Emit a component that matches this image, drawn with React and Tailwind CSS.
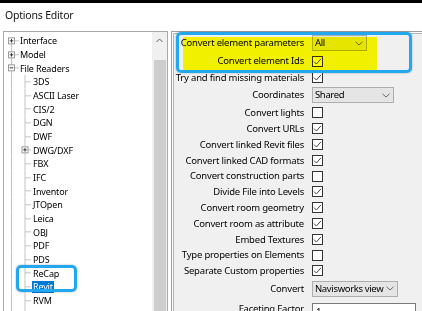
import React from "react";

const TREE = [
  { label: "Interface", level: 0, toggle: "plus", first: true },
  { label: "Model", level: 0, toggle: "plus" },
  { label: "File Readers", level: 0, toggle: "minus" },
  { label: "3DS", level: 1 },
  { label: "ASCII Laser", level: 1 },
  { label: "CIS/2", level: 1 },
  { label: "DGN", level: 1 },
  { label: "DWF", level: 1 },
  { label: "DWG/DXF", level: 1, toggle: "plus" },
  { label: "FBX", level: 1 },
  { label: "IFC", level: 1 },
  { label: "Inventor", level: 1 },
  { label: "JTOpen", level: 1 },
  { label: "Leica", level: 1 },
  { label: "OBJ", level: 1 },
  { label: "PDF", level: 1 },
  { label: "PDS", level: 1 },
  { label: "ReCap", level: 1 },
  { label: "Revit", level: 1, selected: true },
  { label: "RVM", level: 1 },
  { label: "STL", level: 1 },
];

// rows of the options grid: type, label, value, row height
const OPTIONS = [
  { type: "select", label: "Convert element parameters", value: "All", w: "w-[55px]", h: "h-[18px]" },
  { type: "check", label: "Convert element Ids", checked: true, h: "h-[18px]" },
  { type: "check", label: "Try and find missing materials", checked: true, h: "h-[15px]" },
  { type: "select", label: "Coordinates", value: "Shared", w: "w-[82px]", h: "h-[20px]" },
  { type: "check", label: "Convert lights", checked: false, h: "h-[15.8px]" },
  { type: "check", label: "Convert URLs", checked: true, h: "h-[15.8px]" },
  { type: "check", label: "Convert linked Revit files", checked: true, h: "h-[15.8px]" },
  { type: "check", label: "Convert linked CAD formats", checked: true, h: "h-[15.8px]" },
  { type: "check", label: "Convert construction parts", checked: false, h: "h-[15.8px]" },
  { type: "check", label: "Divide File into Levels", checked: true, h: "h-[15.8px]" },
  { type: "check", label: "Convert room geometry", checked: true, h: "h-[15.8px]" },
  { type: "check", label: "Convert room as attribute", checked: true, h: "h-[15.8px]" },
  { type: "check", label: "Embed Textures", checked: true, h: "h-[15.8px]" },
  { type: "check", label: "Type properties on Elements", checked: false, h: "h-[15.8px]" },
  { type: "check", label: "Separate Custom properties", checked: true, h: "h-[15.8px]" },
  { type: "select", label: "Convert", value: "Navisworks view", w: "w-[86px]", h: "h-[20px]" },
  { type: "input", label: "Faceting Factor", value: "1", h: "h-[20px]" },
];

const LINE = "#c3c3c3";

function ToggleBox({ cx, kind }) {
  return (
    <g>
      <rect x={cx - 3} y={3.84} width={6} height={6} fill="#fff" stroke="#9a9a9a" strokeWidth={1} />
      <line x1={cx - 1.8} y1={6.84} x2={cx + 1.8} y2={6.84} stroke="#333" strokeWidth={1} />
      {kind === "plus" && (
        <line x1={cx} y1={5.04} x2={cx} y2={8.64} stroke="#333" strokeWidth={1} />
      )}
    </g>
  );
}

function TreeLines({ row }) {
  const root = 7.5;
  if (row.level === 0) {
    return (
      <svg width="16" height="13.68" viewBox="0 0 16 13.68" className="shrink-0">
        <line x1={root} y1={row.first ? 6.84 : 0} x2={root} y2={13.68} stroke={LINE} />
        <line x1={root} y1={6.84} x2={15} y2={6.84} stroke={LINE} />
        <ToggleBox cx={root} kind={row.toggle} />
      </svg>
    );
  }
  const child = 21;
  return (
    <svg width="29" height="13.68" viewBox="0 0 29 13.68" className="shrink-0">
      <line x1={root} y1={0} x2={root} y2={13.68} stroke={LINE} />
      <line x1={child} y1={0} x2={child} y2={13.68} stroke={LINE} />
      <line x1={child} y1={6.84} x2={27} y2={6.84} stroke={LINE} />
      {row.toggle && <ToggleBox cx={child} kind={row.toggle} />}
    </svg>
  );
}

function Chevron() {
  return (
    <svg width="8" height="5" viewBox="0 0 8 5" className="shrink-0">
      <path d="M0.5 0.8 L4 4 L7.5 0.8" fill="none" stroke="#6a6a6a" strokeWidth="1" />
    </svg>
  );
}

function Check({ checked }) {
  return (
    <div className="w-[11px] h-[11px] border border-[#333333] bg-white flex items-center justify-center">
      {checked && (
        <svg width="9" height="9" viewBox="0 0 9 9">
          <path d="M1 4.6 L3.4 7 L8 1.8" fill="none" stroke="#444" strokeWidth="1" />
        </svg>
      )}
    </div>
  );
}

function Control({ opt }) {
  if (opt.type === "check") return <Check checked={opt.checked} />;
  if (opt.type === "input")
    return (
      <div className="w-[104px] h-[17px] mt-[5px] border border-[#7a7a7a] bg-white pl-[3px] leading-[15px]">
        {opt.value}
      </div>
    );
  return (
    <div
      className={`${opt.w} h-[16px] border border-[#adadad] bg-[#e5e5e5] flex items-center justify-between pl-[2px] pr-[3px]`}
    >
      <span className="leading-none whitespace-nowrap tracking-[-0.35px]">{opt.value}</span>
      <Chevron />
    </div>
  );
}

export default function App() {
  return (
    <div className="relative w-[422px] h-[311px] overflow-hidden bg-white text-black font-['Noto_Sans',sans-serif] flex flex-col">
      <div className="h-[3px] bg-black shrink-0" />
      <div className="h-[25px] shrink-0 flex items-center pl-[5px] text-[10.5px] tracking-[-0.2px] text-[#111]">
        Options Editor
      </div>

      <div className="flex-1 flex pt-[3px] min-h-0">
        {/* tree */}
        <div className="ml-[3px] w-[165px] shrink-0 border-l border-t border-r border-[#a9a9a9] flex">
          <div className="flex-1 pt-[2px] text-[9px] tracking-[-0.15px]">
            {TREE.map((row) => (
              <div key={row.label} className="h-[13.68px] flex items-center">
                <TreeLines row={row} />
                {row.selected ? (
                  <span className="-ml-px px-px h-[12px] leading-[12px] bg-[#0078d7] text-white">
                    {row.label}
                  </span>
                ) : (
                  <span className="leading-none whitespace-nowrap">{row.label}</span>
                )}
              </div>
            ))}
          </div>
          <div className="w-[15px] bg-[#f0f0f0] flex flex-col items-center">
            <div className="h-[17px] w-full flex items-center justify-center">
              <svg width="7" height="5" viewBox="0 0 7 5">
                <path d="M0.5 4 L3.5 1 L6.5 4" fill="none" stroke="#606060" strokeWidth="1" />
              </svg>
            </div>
            <div className="h-[11px]" />
            <div className="flex-1 w-[12px] bg-[#cdcdcd]" />
          </div>
        </div>

        {/* options */}
        <div className="ml-[3px] flex-1 border-l border-t border-[#a0a0a0] shadow-[inset_1px_1px_0_#ffffff,inset_2px_2px_0_#b4b4b4] bg-[#f0f0f0] pt-[2px] text-[9.5px] tracking-[-0.2px]">
          {OPTIONS.map((opt) => (
            <div key={opt.label} className={`${opt.h} flex items-center`}>
              <div className="w-[132px] text-right whitespace-nowrap leading-none">{opt.label}</div>
              <div className="ml-[8px]">
                <Control opt={opt} />
              </div>
            </div>
          ))}
        </div>
      </div>

      {/* annotations drawn over the screenshot */}
      <div className="absolute left-[183px] top-[37px] w-[194px] h-[33px] bg-[#ffff00] mix-blend-multiply pointer-events-none" />
      <div className="absolute left-[176px] top-[32px] w-[236px] h-[41px] border-[3px] border-[#21a8ee] rounded-[5px] shadow-[0_0_2px_rgba(0,0,0,0.35)] pointer-events-none" />
      <div className="absolute left-[16px] top-[265px] w-[61px] h-[27px] border-[3px] border-[#21a8ee] rounded-[5px] shadow-[0_0_2px_rgba(0,0,0,0.35)] pointer-events-none" />
    </div>
  );
}
